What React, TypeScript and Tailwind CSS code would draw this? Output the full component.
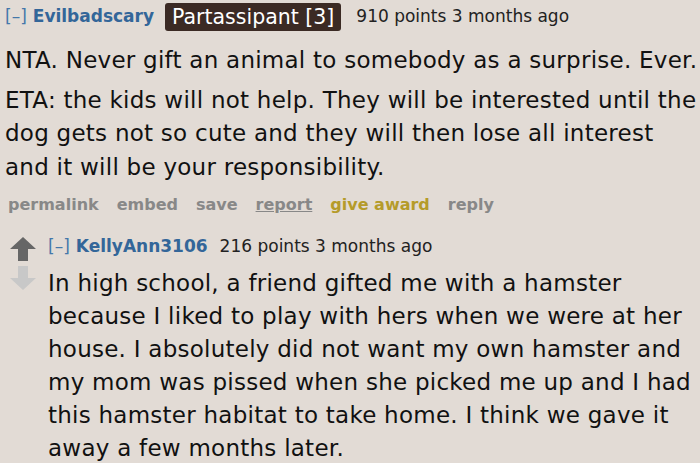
const font = "font-['DejaVu_Sans',sans-serif]";

function Arrow({ up, color }: { up?: boolean; color: string }) {
  return (
    <svg width="26" height="24" viewBox="0 0 26 24" className={up ? "" : "rotate-180"}>
      <path d="M13 0 L26 12 L18 12 L18 24 L8 24 L8 12 L0 12 Z" fill={color} />
    </svg>
  );
}

export default function App() {
  return (
    <div className={`w-[700px] h-[463px] overflow-hidden bg-[#e2dbd5] text-[#111] ${font}`}>
      {/* Parent comment */}
      <div className="pl-[5px] pt-[3px]">
        <div className="flex items-center h-[28px] text-[17px]">
          <span className="text-[#4477aa]">[–]</span>
          <span className="ml-[6px] font-bold text-[#336699]">Evilbadscary</span>
          <span className="ml-[11px] bg-[#3b2a24] text-white text-[20.5px] rounded-[3px] px-[7px] h-[28px] flex items-center">
            Partassipant [3]
          </span>
          <span className="ml-[15px] text-[#222]">910 points 3 months ago</span>
        </div>
        <div className="mt-[13px] text-[23px] leading-[33.5px] tracking-[0.25px]">
          <p>NTA. Never gift an animal to somebody as a surprise. Ever.</p>
          <p className="mt-[6px]">
            ETA: the kids will not help. They will be interested until the dog gets not so cute and they will then lose
            all interest and it will be your responsibility.
          </p>
        </div>
        <div className="mt-[9px] flex gap-[18px] text-[16px] font-bold text-[#888] pl-[3px]">
          <span>permalink</span>
          <span>embed</span>
          <span>save</span>
          <span className="underline">report</span>
          <span className="text-[#b59b2a]">give award</span>
          <span>reply</span>
        </div>
      </div>

      {/* Child comment */}
      <div className="flex mt-[18px] pl-[10px]">
        <div className="flex flex-col gap-[5px] pt-[2px] w-[26px]">
          <Arrow up color="#666" />
          <Arrow color="#c8c8c8" />
        </div>
        <div className="ml-[12px] flex-1">
          <div className="flex items-center text-[17px] h-[24px]">
            <span className="text-[#4477aa]">[–]</span>
            <span className="ml-[6px] font-bold text-[#336699]">KellyAnn3106</span>
            <span className="ml-[12px] text-[#222]">216 points 3 months ago</span>
          </div>
          <p className="mt-[8px] text-[23px] leading-[33px] tracking-[0.25px]">
            In high school, a friend gifted me with a hamster because I liked to play with hers when we were at her
            house. I absolutely did not want my own hamster and my mom was pissed when she picked me up and I had this
            hamster habitat to take home. I think we gave it away a few months later.
          </p>
        </div>
      </div>
    </div>
  );
}
